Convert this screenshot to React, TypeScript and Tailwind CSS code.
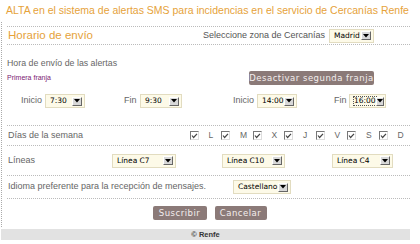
import React from 'react';

const sans = "font-['Liberation_Sans',Arial,sans-serif]";
const verd = "font-['DejaVu_Sans',Verdana,sans-serif]";

function Select({ value, className, focus }: { value: string; className: string; focus?: boolean }) {
  return (
    <div
      className={`flex h-[14px] items-center justify-between whitespace-nowrap border border-[#e2dcc0] bg-[#fdfae8] pl-[4px] pr-[2px] text-[7.5px] leading-none text-black ${verd} ${className}`}
    >
      <span className={focus ? 'outline outline-1 outline-dotted outline-[#555]' : ''}>{value}</span>
      <span className="flex h-[9px] w-[10px] items-center justify-center border border-t-white border-l-white border-r-[#666] border-b-[#666] bg-[#d8d8d8]">
        <svg width="6" height="4" viewBox="0 0 6 4">
          <path d="M0 0h6L3 3.5z" fill="#000" />
        </svg>
      </span>
    </div>
  );
}

function Check() {
  return (
    <span className="flex h-[9px] w-[9px] items-center justify-center border border-t-[#777] border-l-[#777] border-r-[#ddd] border-b-[#ddd] bg-white">
      <svg width="7" height="6" viewBox="0 0 7 6">
        <path d="M1 2.5l1.6 2L6 0.8" stroke="#444" strokeWidth="1.2" fill="none" />
      </svg>
    </span>
  );
}

function Btn({ children, className }: { children: React.ReactNode; className: string }) {
  return (
    <button
      className={`flex h-[14px] items-center justify-center whitespace-nowrap rounded-[2px] bg-[#8b7a78] text-[8.5px] leading-none tracking-[0.5px] text-[#f4eeee] ${verd} ${className}`}
    >
      {children}
    </button>
  );
}

const dias = ['L', 'M', 'X', 'J', 'V', 'S', 'D'];

export default function App() {
  return (
    <div className={`h-[244px] w-[420px] overflow-hidden bg-white ${sans}`}>
      <div className="flex h-[22px] items-center pl-[6px] text-[10.5px] text-[#e6a23a]">
        ALTA en el sistema de alertas SMS para incidencias en el servicio de Cercanías Renfe
      </div>

      <div className="ml-[1px] border-l border-dotted border-[#aaa] pt-[4px] pl-[5px] pr-[10px]">
        <div className="flex h-[19px] items-center border-y border-dotted border-[#bbb] text-[#555]">
          <span className="w-[196px] pl-[1px] text-[11.5px] text-[#e6a23a]">Horario de envío</span>
          <span className="w-[126px] text-[9px]">Seleccione zona de Cercanías</span>
          <Select value="Madrid" className="w-[45px]" />
        </div>

        <div className="flex h-[81px] flex-col border-b border-dotted border-[#bbb] text-[#666]">
          <div className="mt-[12px] text-[8.8px]">Hora de envío de las alertas</div>
          <div className="mt-[1px] flex items-center justify-between pr-[36px]">
            <span className="text-[7px] text-[#7b1a72]">Primera franja</span>
            <Btn className="w-[125px]">Desactivar segunda franja</Btn>
          </div>
          <div className="mt-[9px] flex items-center text-[9px]">
            <span className="ml-[14px] w-[24px]">Inicio</span>
            <Select value="7:30" className="w-[40px]" />
            <span className="ml-[39px] w-[16px]">Fin</span>
            <Select value="9:30" className="w-[42px]" />
            <span className="ml-[51px] w-[24px]">Inicio</span>
            <Select value="14:00" className="w-[40px]" />
            <span className="ml-[37px] w-[15px]">Fin</span>
            <Select value="16:00" className="w-[37px]" focus />
          </div>
        </div>

        <div className="flex h-[20px] items-center border-b border-dotted border-[#bbb] text-[9px] text-[#666]">
          <span className="w-[187px] pl-[1px]">Días de la semana</span>
          <div className="flex items-center">
            {dias.map((d) => (
              <div key={d} className="flex w-[31.5px] items-center">
                <Check />
                <span className="ml-[10px] text-[8.5px]">{d}</span>
              </div>
            ))}
          </div>
        </div>

        <div className="flex h-[30px] items-center border-b border-dotted border-[#bbb] text-[9px] text-[#666]">
          <span className="w-[105px] pl-[1px]">Líneas</span>
          <Select value="Línea C7" className="w-[64px]" />
          <Select value="Línea C10" className="ml-[46px] w-[63px]" />
          <Select value="Línea C4" className="ml-[47px] w-[61px]" />
        </div>

        <div className="flex h-[23px] items-center border-b border-dotted border-[#bbb] text-[9px] text-[#666]">
          <span className="w-[226px] pl-[1px]">Idioma preferente para la recepción de mensajes.</span>
          <Select value="Castellano" className="w-[58px]" />
        </div>

        <div className="flex h-[28px] items-center justify-center gap-[8px] pl-[2px]">
          <Btn className="w-[54px]">Suscribir</Btn>
          <Btn className="w-[52px]">Cancelar</Btn>
        </div>
      </div>

      <div className="mt-[2px] ml-[1px] mr-[10px] flex h-[11px] items-center justify-center bg-[#e2e2e2] text-[7.5px] font-bold text-[#333]">
        © Renfe
      </div>
    </div>
  );
}
